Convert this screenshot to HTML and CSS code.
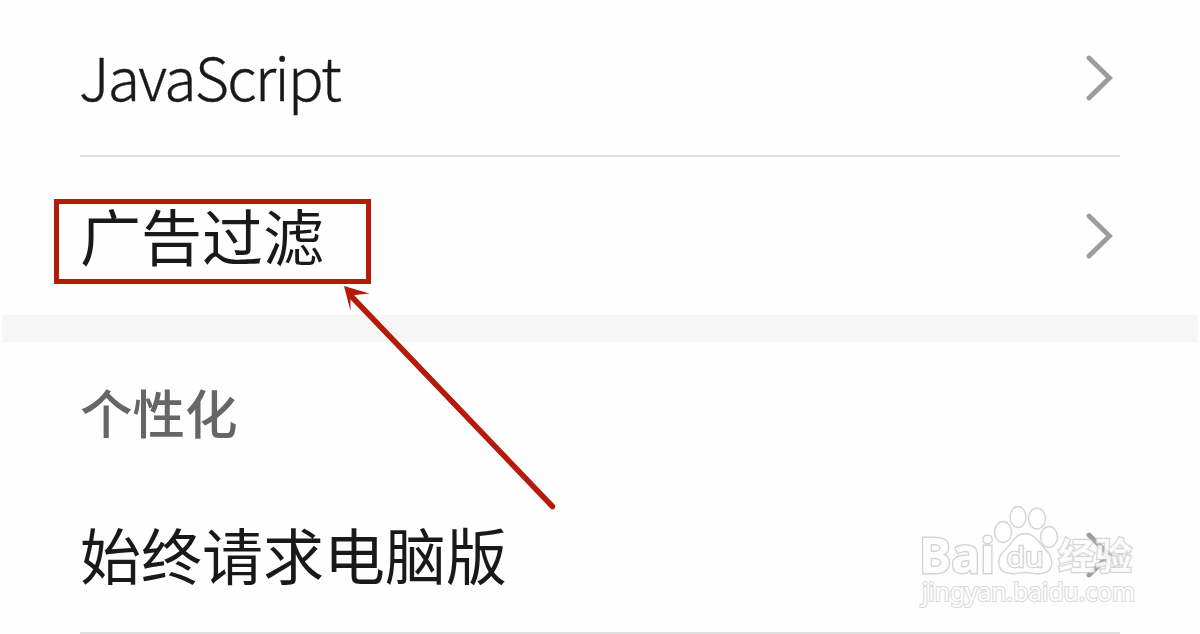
FILE: index.html
```
<!DOCTYPE html>
<html lang="zh-CN">

<head>
    <meta charset="UTF-8">
    <meta name="viewport" content="width=device-width, initial-scale=1.0">
    <title>设置</title>
    <link rel="stylesheet" href="styles.css">
</head>

<body>
    <div class="settings">
        <div class="group">
            <div class="row row-first">
                <span class="label label-latin">JavaScript</span>
                <svg class="chevron" viewBox="0 0 28 48">
                    <path d="M3 4 L23.5 24 L3 44" />
                </svg>
            </div>
            <div class="row row-filter">
                <span class="label">广告过滤</span>
                <svg class="chevron" viewBox="0 0 28 48">
                    <path d="M3 4 L23.5 24 L3 44" />
                </svg>
            </div>
        </div>

        <div class="divider"></div>

        <div class="group">
            <h2 class="group-title">个性化</h2>
            <div class="row row-desktop">
                <span class="label">始终请求电脑版</span>
                <svg class="chevron" viewBox="0 0 28 48">
                    <path d="M3 4 L23.5 24 L3 44" />
                </svg>
            </div>
        </div>

        <!-- 标注 -->
        <div class="highlight"></div>
        <svg class="arrow" viewBox="0 0 220 230">
            <path class="arrow-line" d="M12 12 L212.5 221.5" />
            <path class="arrow-head" d="M4 1 L29.5 8.5 L15 10 L10.5 14 L10.5 26 Z" />
        </svg>

        <!-- 水印 -->
        <svg class="watermark" viewBox="0 0 230 110">
            <g class="wm-logo">
                <text class="wm-bai" x="4" y="73" textLength="76" lengthAdjust="spacingAndGlyphs">Bai</text>
                <ellipse cx="88" cy="32" rx="8.5" ry="10.5" />
                <ellipse cx="103" cy="17" rx="8" ry="10.5" />
                <ellipse cx="122" cy="18.5" rx="8.5" ry="10.5" />
                <ellipse cx="134" cy="37" rx="8.5" ry="10.5" />
                <path d="M110 33.5 C120 33.5 124 43 131 50 C138 57 141 72 126 73.5 C119 74.5 116 72.5 110 72.5 C104 72.5 101 74.5 95 73.5 C80 72 82 57 90 50 C98 43 100 33.5 110 33.5 Z" />
                <text class="wm-du" x="91.5" y="67" textLength="37" lengthAdjust="spacingAndGlyphs">du</text>
                <text class="wm-cn" x="143" y="70" textLength="74" lengthAdjust="spacingAndGlyphs">经验</text>
            </g>
            <text class="wm-url" x="7" y="101" textLength="213" lengthAdjust="spacingAndGlyphs">jingyan.baidu.com</text>
        </svg>
    </div>
</body>

</html>
```
FILE: styles.css
```
* {
    margin: 0;
    padding: 0;
    box-sizing: border-box;
}

body {
    font-family: "Liberation Sans", "Noto Sans CJK SC", sans-serif;
    background: #fefefe;
    color: #191919;
    overflow: hidden;
}

.settings {
    position: relative;
    height: 634px;
    overflow: hidden;
}

.group {
    padding: 0 80px;
}

.row {
    display: flex;
    align-items: center;
    justify-content: space-between;
    border-bottom: 2px solid #dfdfdf;
}

.row-first {
    height: 157px;
}

.row-filter {
    height: 158px;
    border-bottom: none;
}

.row-desktop {
    height: 156px;
}

.label {
    font-family: "Noto Sans CJK SC", sans-serif;
    font-size: 61px;
    line-height: 80px;
    padding-bottom: 3px;
}

.label-latin {
    margin-left: -1px;
    padding-bottom: 4px;
    font-weight: 300;
    font-size: 59px;
    letter-spacing: -1.7px;
    -webkit-text-stroke: 0.4px #191919;
}

.chevron {
    width: 28px;
    height: 48px;
    margin-right: 6px;
}

.chevron path {
    fill: none;
    stroke: #9c9c9c;
    stroke-width: 4.8;
    stroke-linecap: round;
    stroke-linejoin: miter;
}

.divider {
    height: 27px;
    margin: 0 2px;
    background: #f6f6f6;
}

.group-title {
    height: 136px;
    padding-top: 30px;
    font-family: "Noto Sans CJK SC", sans-serif;
    font-size: 52.5px;
    font-weight: 500;
    line-height: 78px;
    color: #666;
}

.highlight {
    position: absolute;
    left: 54px;
    top: 199px;
    width: 317px;
    height: 85px;
    border: 5px solid #b51a0b;
}

.arrow {
    position: absolute;
    left: 340px;
    top: 285px;
    width: 220px;
    height: 230px;
}

.arrow-line {
    fill: none;
    stroke: #b51a0b;
    stroke-width: 5.5;
    stroke-linecap: round;
}

.arrow-head {
    fill: #b51a0b;
}

.watermark {
    position: absolute;
    left: 915px;
    top: 500px;
    width: 230px;
    height: 110px;
    fill: rgba(255, 255, 255, 0.8);
    stroke: #d4d4d4;
    stroke-width: 1.4;
}

.watermark text {
    font-family: "Open Sans", sans-serif;
    font-weight: 700;
    paint-order: stroke;
    fill: #fefefe;
}

.wm-bai {
    font-size: 48px;
    stroke-width: 2.8;
}

.watermark .wm-du {
    font-size: 27px;
    font-weight: 400;
    stroke-width: 2.6;
}

.watermark .wm-cn {
    font-family: "Noto Sans CJK SC", sans-serif;
    font-weight: 700;
    font-size: 37px;
    stroke-width: 2.4;
    fill: rgba(255, 255, 255, 0.85);
    stroke: rgba(200, 200, 200, 0.75);
}

.watermark .wm-url {
    font-family: "Noto Sans", sans-serif;
    font-size: 25px;
    font-weight: 400;
    stroke: #dadada;
    stroke-width: 2.2;
}
```
